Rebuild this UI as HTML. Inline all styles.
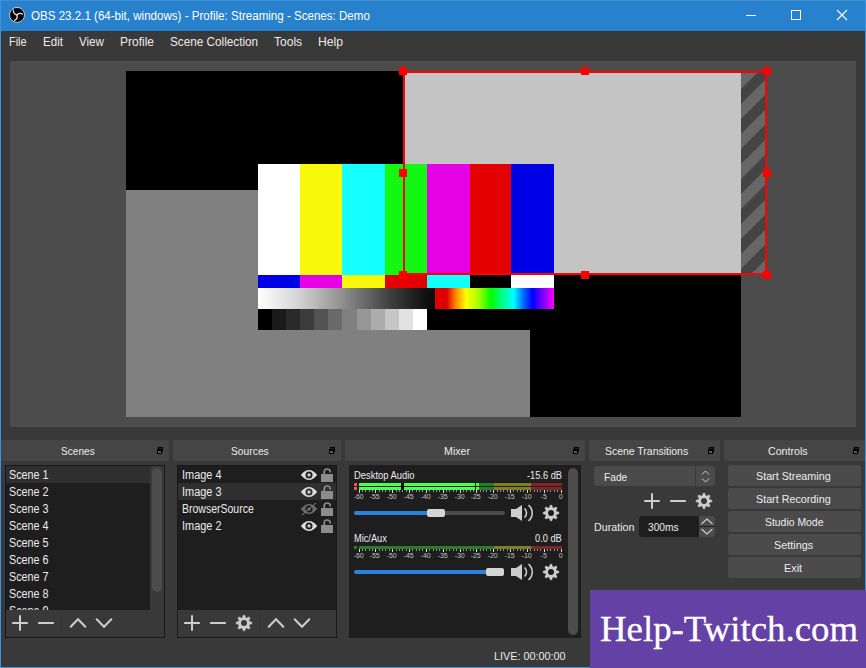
<!DOCTYPE html><html><head><meta charset="utf-8"><style>
html,body{margin:0;padding:0;}
body{width:866px;height:668px;overflow:hidden;background:#3a393a;position:relative;}
body>div{position:absolute;}
.t{white-space:pre;line-height:20px;transform-origin:0 0;}
</style></head><body>
<div style="left:0px;top:0px;width:866px;height:31px;background:#2881cc;"></div>
<div style="left:0px;top:0px;width:866px;height:1px;background:#3e8fcf;"></div>
<div style="left:0px;top:0px;width:1px;height:668px;background:#3d93dd;"></div>
<div style="left:865px;top:0px;width:1px;height:668px;background:#3d93dd;"></div>
<div style="left:0px;top:667px;width:866px;height:1px;background:#3d93dd;"></div>
<div class="t" style="left:30.80px;top:6px;font-size:12.5px;color:#ffffff;transform:scaleX(0.9256);font-family:'Liberation Sans', sans-serif;">OBS 23.2.1 (64-bit, windows) - Profile: Streaming - Scenes: Demo</div>
<div class="t" style="left:9.40px;top:32px;font-size:12.5px;color:#ebebeb;transform:scaleX(0.8745);font-family:'Liberation Sans', sans-serif;">File</div>
<div class="t" style="left:43.00px;top:32px;font-size:12.5px;color:#ebebeb;transform:scaleX(0.9249);font-family:'Liberation Sans', sans-serif;">Edit</div>
<div class="t" style="left:79.00px;top:32px;font-size:12.5px;color:#ebebeb;transform:scaleX(0.9259);font-family:'Liberation Sans', sans-serif;">View</div>
<div class="t" style="left:120.00px;top:32px;font-size:12.5px;color:#ebebeb;transform:scaleX(0.9611);font-family:'Liberation Sans', sans-serif;">Profile</div>
<div class="t" style="left:170.00px;top:32px;font-size:12.5px;color:#ebebeb;transform:scaleX(0.9387);font-family:'Liberation Sans', sans-serif;">Scene Collection</div>
<div class="t" style="left:274.00px;top:32px;font-size:12.5px;color:#ebebeb;transform:scaleX(0.9614);font-family:'Liberation Sans', sans-serif;">Tools</div>
<div class="t" style="left:318.00px;top:32px;font-size:12.5px;color:#ebebeb;transform:scaleX(0.9709);font-family:'Liberation Sans', sans-serif;">Help</div>
<div style="left:10px;top:61px;width:846px;height:366px;background:#4c4c4c;"></div>
<div style="left:126px;top:71px;width:615px;height:346px;background:#000000;"></div>
<div style="left:126px;top:190px;width:404px;height:227px;background:#808080;"></div>
<div style="left:403px;top:71px;width:338px;height:204px;background:#c4c4c4;"></div>
<div style="left:741px;top:71px;width:26px;height:204px;overflow:hidden"><svg width="26" height="204" style="display:block"><rect width="26" height="204" fill="#676767"/><polygon points="-42,0 -27,0 -427,400 -442,400" fill="#444444"/><polygon points="-12,0 3,0 -397,400 -412,400" fill="#444444"/><polygon points="18,0 33,0 -367,400 -382,400" fill="#444444"/><polygon points="48,0 63,0 -337,400 -352,400" fill="#444444"/><polygon points="78,0 93,0 -307,400 -322,400" fill="#444444"/><polygon points="108,0 123,0 -277,400 -292,400" fill="#444444"/><polygon points="138,0 153,0 -247,400 -262,400" fill="#444444"/><polygon points="168,0 183,0 -217,400 -232,400" fill="#444444"/><polygon points="198,0 213,0 -187,400 -202,400" fill="#444444"/><polygon points="228,0 243,0 -157,400 -172,400" fill="#444444"/><polygon points="258,0 273,0 -127,400 -142,400" fill="#444444"/><polygon points="288,0 303,0 -97,400 -112,400" fill="#444444"/><polygon points="318,0 333,0 -67,400 -82,400" fill="#444444"/><polygon points="348,0 363,0 -37,400 -52,400" fill="#444444"/></svg></div>
<div style="left:258px;top:164px;width:42px;height:111px;background:#ffffff;"></div>
<div style="left:258px;top:275px;width:42px;height:13px;background:#0000e6;"></div>
<div style="left:300px;top:164px;width:42px;height:111px;background:#f8f80a;"></div>
<div style="left:300px;top:275px;width:42px;height:13px;background:#e600e6;"></div>
<div style="left:342px;top:164px;width:43px;height:111px;background:#14ffff;"></div>
<div style="left:342px;top:275px;width:43px;height:13px;background:#f8f80a;"></div>
<div style="left:385px;top:164px;width:42px;height:111px;background:#12f812;"></div>
<div style="left:385px;top:275px;width:42px;height:13px;background:#e40000;"></div>
<div style="left:427px;top:164px;width:43px;height:111px;background:#e600e6;"></div>
<div style="left:427px;top:275px;width:43px;height:13px;background:#14ffff;"></div>
<div style="left:470px;top:164px;width:41px;height:111px;background:#e40000;"></div>
<div style="left:470px;top:275px;width:41px;height:13px;background:#000000;"></div>
<div style="left:511px;top:164px;width:43px;height:111px;background:#0000e6;"></div>
<div style="left:511px;top:275px;width:43px;height:13px;background:#ffffff;"></div>
<div style="left:258px;top:288px;width:296px;height:21px;background:#000000;"></div>
<div style="left:258px;top:288px;width:177px;height:21px;background:linear-gradient(to right,#ffffff 0%,#d6d6d6 22%,#8e8e8e 48%,#3e3e3e 75%,#101010 95%,#0a0a0a 100%);"></div>
<div style="left:435px;top:288px;width:119px;height:21px;background:linear-gradient(to right,#e00000 0%,#e00000 10%,#ff8000 17%,#ffff00 26%,#a0ff00 37%,#00ff00 47%,#00ff80 56%,#00ffff 66%,#0060ff 75%,#0000ff 82%,#8000ff 91%,#ff00ff 100%);"></div>
<div style="left:258px;top:309px;width:296px;height:21px;background:#000000;"></div>
<div style="left:258px;top:309px;width:14px;height:21px;background:#000000;"></div>
<div style="left:272px;top:309px;width:14px;height:21px;background:#1a1a1a;"></div>
<div style="left:286px;top:309px;width:14px;height:21px;background:#2a2a2a;"></div>
<div style="left:300px;top:309px;width:14px;height:21px;background:#3c3c3c;"></div>
<div style="left:314px;top:309px;width:14px;height:21px;background:#535353;"></div>
<div style="left:328px;top:309px;width:14px;height:21px;background:#6a6a6a;"></div>
<div style="left:342px;top:309px;width:15px;height:21px;background:#808080;"></div>
<div style="left:357px;top:309px;width:14px;height:21px;background:#969696;"></div>
<div style="left:371px;top:309px;width:14px;height:21px;background:#acacac;"></div>
<div style="left:385px;top:309px;width:14px;height:21px;background:#c6c6c6;"></div>
<div style="left:399px;top:309px;width:14px;height:21px;background:#e2e2e2;"></div>
<div style="left:413px;top:309px;width:14px;height:21px;background:#ffffff;"></div>
<div style="left:403px;top:71px;width:364px;height:2px;background:#ff0000;"></div>
<div style="left:403px;top:273px;width:364px;height:2px;background:#ff0000;"></div>
<div style="left:403px;top:71px;width:2px;height:204px;background:#ff0000;"></div>
<div style="left:765px;top:71px;width:2px;height:204px;background:#ff0000;"></div>
<div style="left:399px;top:67px;width:8px;height:8px;background:#ff0000;"></div>
<div style="left:399px;top:169px;width:8px;height:8px;background:#ff0000;"></div>
<div style="left:399px;top:271px;width:8px;height:8px;background:#ff0000;"></div>
<div style="left:581px;top:67px;width:8px;height:8px;background:#ff0000;"></div>
<div style="left:581px;top:271px;width:8px;height:8px;background:#ff0000;"></div>
<div style="left:763px;top:67px;width:8px;height:8px;background:#ff0000;"></div>
<div style="left:763px;top:169px;width:8px;height:8px;background:#ff0000;"></div>
<div style="left:763px;top:271px;width:8px;height:8px;background:#ff0000;"></div>
<div style="left:1px;top:440px;width:168px;height:21px;background:#464546;"></div>
<div class="t" style="left:60.50px;top:441px;font-size:11.5px;color:#ebebeb;transform:scaleX(0.8782);font-family:'Liberation Sans', sans-serif;">Scenes</div>
<div style="left:173px;top:440px;width:168px;height:21px;background:#464546;"></div>
<div class="t" style="left:230.60px;top:441px;font-size:11.5px;color:#ebebeb;transform:scaleX(0.8947);font-family:'Liberation Sans', sans-serif;">Sources</div>
<div style="left:345px;top:440px;width:240px;height:21px;background:#464546;"></div>
<div class="t" style="left:444.20px;top:441px;font-size:11.5px;color:#ebebeb;transform:scaleX(0.9280);font-family:'Liberation Sans', sans-serif;">Mixer</div>
<div style="left:589px;top:440px;width:131px;height:21px;background:#464546;"></div>
<div class="t" style="left:605.40px;top:441px;font-size:11.5px;color:#ebebeb;transform:scaleX(0.9094);font-family:'Liberation Sans', sans-serif;">Scene Transitions</div>
<div style="left:724px;top:440px;width:141px;height:21px;background:#464546;"></div>
<div class="t" style="left:767.70px;top:441px;font-size:11.5px;color:#ebebeb;transform:scaleX(0.9259);font-family:'Liberation Sans', sans-serif;">Controls</div>
<div style="left:5px;top:465px;width:160px;height:173px;background:#181818;"></div>
<div style="left:6px;top:466px;width:158px;height:171px;background:#1f1e1f;"></div>
<div style="left:6px;top:466px;width:144px;height:17px;background:#302f30;"></div>
<div class="t" style="left:9.20px;top:465px;font-size:12px;color:#ebebeb;transform:scaleX(0.8955);font-family:'Liberation Sans', sans-serif;">Scene 1</div>
<div class="t" style="left:9.20px;top:482px;font-size:12px;color:#ebebeb;transform:scaleX(0.8955);font-family:'Liberation Sans', sans-serif;">Scene 2</div>
<div class="t" style="left:9.20px;top:499px;font-size:12px;color:#ebebeb;transform:scaleX(0.8955);font-family:'Liberation Sans', sans-serif;">Scene 3</div>
<div class="t" style="left:9.20px;top:516px;font-size:12px;color:#ebebeb;transform:scaleX(0.8955);font-family:'Liberation Sans', sans-serif;">Scene 4</div>
<div class="t" style="left:9.20px;top:533px;font-size:12px;color:#ebebeb;transform:scaleX(0.8955);font-family:'Liberation Sans', sans-serif;">Scene 5</div>
<div class="t" style="left:9.20px;top:550px;font-size:12px;color:#ebebeb;transform:scaleX(0.8955);font-family:'Liberation Sans', sans-serif;">Scene 6</div>
<div class="t" style="left:9.20px;top:567px;font-size:12px;color:#ebebeb;transform:scaleX(0.8955);font-family:'Liberation Sans', sans-serif;">Scene 7</div>
<div class="t" style="left:9.20px;top:584px;font-size:12px;color:#ebebeb;transform:scaleX(0.8955);font-family:'Liberation Sans', sans-serif;">Scene 8</div>
<div class="t" style="left:9.20px;top:601px;font-size:12px;color:#ebebeb;transform:scaleX(0.8955);font-family:'Liberation Sans', sans-serif;">Scene 9</div>
<div style="left:177px;top:465px;width:160px;height:173px;background:#181818;"></div>
<div style="left:178px;top:466px;width:158px;height:171px;background:#1f1e1f;"></div>
<div style="left:178px;top:483px;width:158px;height:17px;background:#302f30;"></div>
<div style="left:349px;top:465px;width:232px;height:173px;background:#1f1e1f;"></div>
<svg style="position:absolute;left:155px;top:442px" width="14" height="16" viewBox="155 442 14 16"><rect x="158" y="447" width="5" height="1.5" fill="#000"/><rect x="162" y="447" width="1" height="5" fill="#000"/><rect x="158" y="447" width="1" height="2" fill="#000"/><rect x="157" y="449" width="5" height="5" fill="#000"/><rect x="158" y="451" width="3" height="2" fill="#5c5c5c"/></svg>
<svg style="position:absolute;left:327px;top:442px" width="14" height="16" viewBox="327 442 14 16"><rect x="330" y="447" width="5" height="1.5" fill="#000"/><rect x="334" y="447" width="1" height="5" fill="#000"/><rect x="330" y="447" width="1" height="2" fill="#000"/><rect x="329" y="449" width="5" height="5" fill="#000"/><rect x="330" y="451" width="3" height="2" fill="#5c5c5c"/></svg>
<svg style="position:absolute;left:571px;top:442px" width="14" height="16" viewBox="571 442 14 16"><rect x="574" y="447" width="5" height="1.5" fill="#000"/><rect x="578" y="447" width="1" height="5" fill="#000"/><rect x="574" y="447" width="1" height="2" fill="#000"/><rect x="573" y="449" width="5" height="5" fill="#000"/><rect x="574" y="451" width="3" height="2" fill="#5c5c5c"/></svg>
<svg style="position:absolute;left:706px;top:442px" width="14" height="16" viewBox="706 442 14 16"><rect x="709" y="447" width="5" height="1.5" fill="#000"/><rect x="713" y="447" width="1" height="5" fill="#000"/><rect x="709" y="447" width="1" height="2" fill="#000"/><rect x="708" y="449" width="5" height="5" fill="#000"/><rect x="709" y="451" width="3" height="2" fill="#5c5c5c"/></svg>
<svg style="position:absolute;left:851px;top:442px" width="14" height="16" viewBox="851 442 14 16"><rect x="854" y="447" width="5" height="1.5" fill="#000"/><rect x="858" y="447" width="1" height="5" fill="#000"/><rect x="854" y="447" width="1" height="2" fill="#000"/><rect x="853" y="449" width="5" height="5" fill="#000"/><rect x="854" y="451" width="3" height="2" fill="#5c5c5c"/></svg>
<div style="left:6px;top:610px;width:158px;height:27px;background:#3a393a;"></div>
<div style="left:178px;top:610px;width:158px;height:27px;background:#3a393a;"></div>
<div style="left:61px;top:614px;width:1px;height:18px;background:#313031;"></div>
<div style="left:260px;top:614px;width:1px;height:18px;background:#313031;"></div>
<svg style="position:absolute;left:0px;top:605px" width="170" height="35" viewBox="0 605 170 35"><path d="M12.9,623 H27.1 M20,615.9 V630.1" stroke="#cdcdcd" stroke-width="2" stroke-linecap="round" fill="none"/><path d="M38.9,623 H53.1" stroke="#cdcdcd" stroke-width="2" stroke-linecap="round" fill="none"/><path d="M70.7,626.75 L78,619.25 L85.3,626.75" stroke="#cdcdcd" stroke-width="2" stroke-linecap="round" fill="none"/><path d="M96.7,619.25 L104,626.75 L111.3,619.25" stroke="#cdcdcd" stroke-width="2" stroke-linecap="round" fill="none"/></svg>
<svg style="position:absolute;left:175px;top:605px" width="165" height="35" viewBox="175 605 165 35"><path d="M184.9,623 H199.1 M192,615.9 V630.1" stroke="#cdcdcd" stroke-width="2" stroke-linecap="round" fill="none"/><path d="M210.9,623 H225.1" stroke="#cdcdcd" stroke-width="2" stroke-linecap="round" fill="none"/><polygon points="242.01,618.20 242.39,617.74 243.31,615.13 244.69,615.13 245.61,617.74 245.99,618.20 246.58,618.14 249.08,616.95 250.05,617.92 248.86,620.42 248.80,621.01 249.26,621.39 251.87,622.31 251.87,623.69 249.26,624.61 248.80,624.99 248.86,625.58 250.05,628.08 249.08,629.05 246.58,627.86 245.99,627.80 245.61,628.26 244.69,630.87 243.31,630.87 242.39,628.26 242.01,627.80 241.42,627.86 238.92,629.05 237.95,628.08 239.14,625.58 239.20,624.99 238.74,624.61 236.13,623.69 236.13,622.31 238.74,621.39 239.20,621.01 239.14,620.42 237.95,617.92 238.92,616.95 241.42,618.14" fill="#cdcdcd" stroke="#cdcdcd" stroke-width="0.6" stroke-linejoin="round"/><circle cx="244" cy="623" r="5.5" fill="#cdcdcd"/><circle cx="244" cy="623" r="3.0" fill="#3a393a"/><path d="M268.7,626.75 L276,619.25 L283.3,626.75" stroke="#cdcdcd" stroke-width="2" stroke-linecap="round" fill="none"/><path d="M294.7,619.25 L302,626.75 L309.3,619.25" stroke="#cdcdcd" stroke-width="2" stroke-linecap="round" fill="none"/></svg>
<div style="left:150px;top:466px;width:14px;height:144px;background:#3a393a;"></div>
<div style="left:152px;top:468px;width:10px;height:124px;background:#4c4c4c;border-radius:5px"></div>
<div class="t" style="left:181.50px;top:465px;font-size:12px;color:#ebebeb;transform:scaleX(0.9107);font-family:'Liberation Sans', sans-serif;">Image 4</div>
<svg style="position:absolute;left:298px;top:466px" width="38" height="18" viewBox="298 466 38 18"><path d="M300.8,475 Q309,465 317.2,475 Q309,485 300.8,475 Z" fill="#dcdcdc"/><circle cx="309" cy="475" r="3.5" fill="#1f1e1f"/><circle cx="309" cy="475" r="1.7" fill="#dcdcdc" opacity="0.9"/><rect x="321" y="474" width="12" height="8" fill="#8c8c8c"/><path d="M324.2,475 V472 A3,3 0 0 1 330.2,472 V472.6" stroke="#8c8c8c" stroke-width="1.7" fill="none"/></svg>
<div class="t" style="left:181.50px;top:482px;font-size:12px;color:#ebebeb;transform:scaleX(0.9107);font-family:'Liberation Sans', sans-serif;">Image 3</div>
<svg style="position:absolute;left:298px;top:483px" width="38" height="18" viewBox="298 483 38 18"><path d="M300.8,492 Q309,482 317.2,492 Q309,502 300.8,492 Z" fill="#dcdcdc"/><circle cx="309" cy="492" r="3.5" fill="#302f30"/><circle cx="309" cy="492" r="1.7" fill="#dcdcdc" opacity="0.9"/><rect x="321" y="491" width="12" height="8" fill="#8c8c8c"/><path d="M324.2,492 V489 A3,3 0 0 1 330.2,489 V489.6" stroke="#8c8c8c" stroke-width="1.7" fill="none"/></svg>
<div class="t" style="left:181.50px;top:499px;font-size:12px;color:#ebebeb;transform:scaleX(0.8744);font-family:'Liberation Sans', sans-serif;">BrowserSource</div>
<svg style="position:absolute;left:298px;top:500px" width="38" height="18" viewBox="298 500 38 18"><path d="M300.8,509 Q309,499 317.2,509 Q309,519 300.8,509 Z" fill="#6a6a6a"/><circle cx="309" cy="509" r="3.5" fill="#1f1e1f"/><circle cx="309" cy="509" r="1.7" fill="#6a6a6a" opacity="0.9"/><path d="M302,515 L316,503" stroke="#8a8a8a" stroke-width="1"/><rect x="321" y="508" width="12" height="8" fill="#8c8c8c"/><path d="M324.2,509 V506 A3,3 0 0 1 330.2,506 V506.6" stroke="#8c8c8c" stroke-width="1.7" fill="none"/></svg>
<div class="t" style="left:181.50px;top:516px;font-size:12px;color:#ebebeb;transform:scaleX(0.9107);font-family:'Liberation Sans', sans-serif;">Image 2</div>
<svg style="position:absolute;left:298px;top:517px" width="38" height="18" viewBox="298 517 38 18"><path d="M300.8,526 Q309,516 317.2,526 Q309,536 300.8,526 Z" fill="#dcdcdc"/><circle cx="309" cy="526" r="3.5" fill="#1f1e1f"/><circle cx="309" cy="526" r="1.7" fill="#dcdcdc" opacity="0.9"/><rect x="321" y="525" width="12" height="8" fill="#8c8c8c"/><path d="M324.2,526 V523 A3,3 0 0 1 330.2,523 V523.6" stroke="#8c8c8c" stroke-width="1.7" fill="none"/></svg>
<svg style="position:absolute;left:349px;top:465px" width="232" height="173" viewBox="349 465 232 173"><rect x="359" y="483" width="134.7" height="3" fill="#267f26"/><rect x="493.7" y="483" width="37.30000000000001" height="3" fill="#7f7f26"/><rect x="531" y="483" width="31" height="3" fill="#7f2626"/><rect x="359" y="483" width="120" height="3" fill="#4cff4c"/><rect x="359" y="487" width="134.7" height="3" fill="#267f26"/><rect x="493.7" y="487" width="37.30000000000001" height="3" fill="#7f7f26"/><rect x="531" y="487" width="31" height="3" fill="#7f2626"/><rect x="359" y="487" width="120" height="3" fill="#4cff4c"/><rect x="354" y="483" width="3" height="3" fill="#ff4c4c"/><rect x="354" y="487" width="3" height="3" fill="#ff4c4c"/><rect x="401" y="483" width="3" height="7" fill="#000"/><rect x="475" y="483" width="1" height="7" fill="#1f1e1f"/><rect x="359" y="490" width="1" height="3" fill="#d8d8d8"/><rect x="362" y="490" width="1" height="2" fill="#8f8f8f"/><rect x="365" y="490" width="1" height="2" fill="#8f8f8f"/><rect x="369" y="490" width="1" height="2" fill="#8f8f8f"/><rect x="372" y="490" width="1" height="2" fill="#8f8f8f"/><rect x="375" y="490" width="1" height="3" fill="#d8d8d8"/><rect x="379" y="490" width="1" height="2" fill="#8f8f8f"/><rect x="382" y="490" width="1" height="2" fill="#8f8f8f"/><rect x="385" y="490" width="1" height="2" fill="#8f8f8f"/><rect x="389" y="490" width="1" height="2" fill="#8f8f8f"/><rect x="392" y="490" width="1" height="3" fill="#d8d8d8"/><rect x="396" y="490" width="1" height="2" fill="#8f8f8f"/><rect x="399" y="490" width="1" height="2" fill="#8f8f8f"/><rect x="402" y="490" width="1" height="2" fill="#8f8f8f"/><rect x="406" y="490" width="1" height="2" fill="#8f8f8f"/><rect x="409" y="490" width="1" height="3" fill="#d8d8d8"/><rect x="412" y="490" width="1" height="2" fill="#8f8f8f"/><rect x="416" y="490" width="1" height="2" fill="#8f8f8f"/><rect x="419" y="490" width="1" height="2" fill="#8f8f8f"/><rect x="422" y="490" width="1" height="2" fill="#8f8f8f"/><rect x="426" y="490" width="1" height="3" fill="#d8d8d8"/><rect x="429" y="490" width="1" height="2" fill="#8f8f8f"/><rect x="433" y="490" width="1" height="2" fill="#8f8f8f"/><rect x="436" y="490" width="1" height="2" fill="#8f8f8f"/><rect x="439" y="490" width="1" height="2" fill="#8f8f8f"/><rect x="443" y="490" width="1" height="3" fill="#d8d8d8"/><rect x="446" y="490" width="1" height="2" fill="#8f8f8f"/><rect x="449" y="490" width="1" height="2" fill="#8f8f8f"/><rect x="453" y="490" width="1" height="2" fill="#8f8f8f"/><rect x="456" y="490" width="1" height="2" fill="#8f8f8f"/><rect x="460" y="490" width="1" height="3" fill="#d8d8d8"/><rect x="463" y="490" width="1" height="2" fill="#8f8f8f"/><rect x="466" y="490" width="1" height="2" fill="#8f8f8f"/><rect x="470" y="490" width="1" height="2" fill="#8f8f8f"/><rect x="473" y="490" width="1" height="2" fill="#8f8f8f"/><rect x="476" y="490" width="1" height="3" fill="#d8d8d8"/><rect x="480" y="490" width="1" height="2" fill="#8f8f8f"/><rect x="483" y="490" width="1" height="2" fill="#8f8f8f"/><rect x="486" y="490" width="1" height="2" fill="#8f8f8f"/><rect x="490" y="490" width="1" height="2" fill="#8f8f8f"/><rect x="493" y="490" width="1" height="3" fill="#d8d8d8"/><rect x="497" y="490" width="1" height="2" fill="#8f8f8f"/><rect x="500" y="490" width="1" height="2" fill="#8f8f8f"/><rect x="503" y="490" width="1" height="2" fill="#8f8f8f"/><rect x="507" y="490" width="1" height="2" fill="#8f8f8f"/><rect x="510" y="490" width="1" height="3" fill="#d8d8d8"/><rect x="513" y="490" width="1" height="2" fill="#8f8f8f"/><rect x="517" y="490" width="1" height="2" fill="#8f8f8f"/><rect x="520" y="490" width="1" height="2" fill="#8f8f8f"/><rect x="523" y="490" width="1" height="2" fill="#8f8f8f"/><rect x="527" y="490" width="1" height="3" fill="#d8d8d8"/><rect x="530" y="490" width="1" height="2" fill="#8f8f8f"/><rect x="534" y="490" width="1" height="2" fill="#8f8f8f"/><rect x="537" y="490" width="1" height="2" fill="#8f8f8f"/><rect x="540" y="490" width="1" height="2" fill="#8f8f8f"/><rect x="544" y="490" width="1" height="3" fill="#d8d8d8"/><rect x="547" y="490" width="1" height="2" fill="#8f8f8f"/><rect x="550" y="490" width="1" height="2" fill="#8f8f8f"/><rect x="554" y="490" width="1" height="2" fill="#8f8f8f"/><rect x="557" y="490" width="1" height="2" fill="#8f8f8f"/><rect x="561" y="490" width="1" height="3" fill="#d8d8d8"/><rect x="359" y="546" width="134.7" height="3" fill="#267f26"/><rect x="493.7" y="546" width="37.30000000000001" height="3" fill="#7f7f26"/><rect x="531" y="546" width="31" height="3" fill="#7f2626"/><rect x="354" y="546" width="3" height="3" fill="#267f26"/><rect x="359" y="549" width="1" height="3" fill="#d8d8d8"/><rect x="362" y="549" width="1" height="2" fill="#8f8f8f"/><rect x="365" y="549" width="1" height="2" fill="#8f8f8f"/><rect x="369" y="549" width="1" height="2" fill="#8f8f8f"/><rect x="372" y="549" width="1" height="2" fill="#8f8f8f"/><rect x="375" y="549" width="1" height="3" fill="#d8d8d8"/><rect x="379" y="549" width="1" height="2" fill="#8f8f8f"/><rect x="382" y="549" width="1" height="2" fill="#8f8f8f"/><rect x="385" y="549" width="1" height="2" fill="#8f8f8f"/><rect x="389" y="549" width="1" height="2" fill="#8f8f8f"/><rect x="392" y="549" width="1" height="3" fill="#d8d8d8"/><rect x="396" y="549" width="1" height="2" fill="#8f8f8f"/><rect x="399" y="549" width="1" height="2" fill="#8f8f8f"/><rect x="402" y="549" width="1" height="2" fill="#8f8f8f"/><rect x="406" y="549" width="1" height="2" fill="#8f8f8f"/><rect x="409" y="549" width="1" height="3" fill="#d8d8d8"/><rect x="412" y="549" width="1" height="2" fill="#8f8f8f"/><rect x="416" y="549" width="1" height="2" fill="#8f8f8f"/><rect x="419" y="549" width="1" height="2" fill="#8f8f8f"/><rect x="422" y="549" width="1" height="2" fill="#8f8f8f"/><rect x="426" y="549" width="1" height="3" fill="#d8d8d8"/><rect x="429" y="549" width="1" height="2" fill="#8f8f8f"/><rect x="433" y="549" width="1" height="2" fill="#8f8f8f"/><rect x="436" y="549" width="1" height="2" fill="#8f8f8f"/><rect x="439" y="549" width="1" height="2" fill="#8f8f8f"/><rect x="443" y="549" width="1" height="3" fill="#d8d8d8"/><rect x="446" y="549" width="1" height="2" fill="#8f8f8f"/><rect x="449" y="549" width="1" height="2" fill="#8f8f8f"/><rect x="453" y="549" width="1" height="2" fill="#8f8f8f"/><rect x="456" y="549" width="1" height="2" fill="#8f8f8f"/><rect x="460" y="549" width="1" height="3" fill="#d8d8d8"/><rect x="463" y="549" width="1" height="2" fill="#8f8f8f"/><rect x="466" y="549" width="1" height="2" fill="#8f8f8f"/><rect x="470" y="549" width="1" height="2" fill="#8f8f8f"/><rect x="473" y="549" width="1" height="2" fill="#8f8f8f"/><rect x="476" y="549" width="1" height="3" fill="#d8d8d8"/><rect x="480" y="549" width="1" height="2" fill="#8f8f8f"/><rect x="483" y="549" width="1" height="2" fill="#8f8f8f"/><rect x="486" y="549" width="1" height="2" fill="#8f8f8f"/><rect x="490" y="549" width="1" height="2" fill="#8f8f8f"/><rect x="493" y="549" width="1" height="3" fill="#d8d8d8"/><rect x="497" y="549" width="1" height="2" fill="#8f8f8f"/><rect x="500" y="549" width="1" height="2" fill="#8f8f8f"/><rect x="503" y="549" width="1" height="2" fill="#8f8f8f"/><rect x="507" y="549" width="1" height="2" fill="#8f8f8f"/><rect x="510" y="549" width="1" height="3" fill="#d8d8d8"/><rect x="513" y="549" width="1" height="2" fill="#8f8f8f"/><rect x="517" y="549" width="1" height="2" fill="#8f8f8f"/><rect x="520" y="549" width="1" height="2" fill="#8f8f8f"/><rect x="523" y="549" width="1" height="2" fill="#8f8f8f"/><rect x="527" y="549" width="1" height="3" fill="#d8d8d8"/><rect x="530" y="549" width="1" height="2" fill="#8f8f8f"/><rect x="534" y="549" width="1" height="2" fill="#8f8f8f"/><rect x="537" y="549" width="1" height="2" fill="#8f8f8f"/><rect x="540" y="549" width="1" height="2" fill="#8f8f8f"/><rect x="544" y="549" width="1" height="3" fill="#d8d8d8"/><rect x="547" y="549" width="1" height="2" fill="#8f8f8f"/><rect x="550" y="549" width="1" height="2" fill="#8f8f8f"/><rect x="554" y="549" width="1" height="2" fill="#8f8f8f"/><rect x="557" y="549" width="1" height="2" fill="#8f8f8f"/><rect x="561" y="549" width="1" height="3" fill="#d8d8d8"/></svg>
<div class="t" style="left:354.40px;top:466px;font-size:10px;color:#ebebeb;transform:scaleX(0.9395);font-family:'Liberation Sans', sans-serif;">Desktop Audio</div>
<div class="t" style="left:527.00px;top:466px;font-size:10px;color:#ebebeb;transform:scaleX(0.9272);font-family:'Liberation Sans', sans-serif;">-15.6 dB</div>
<div class="t" style="left:354.40px;top:529px;font-size:10px;color:#ebebeb;transform:scaleX(0.9235);font-family:'Liberation Sans', sans-serif;">Mic/Aux</div>
<div class="t" style="left:535.30px;top:529px;font-size:10px;color:#ebebeb;transform:scaleX(0.9247);font-family:'Liberation Sans', sans-serif;">0.0 dB</div>
<div class="t" style="left:343.7px;width:30px;text-align:center;top:487px;font-size:7px;color:#c0c0c0;font-family:'Liberation Sans',sans-serif">-60</div><div class="t" style="left:343.7px;width:30px;text-align:center;top:546px;font-size:7px;color:#c0c0c0;font-family:'Liberation Sans',sans-serif">-60</div><div class="t" style="left:359.7px;width:30px;text-align:center;top:487px;font-size:7px;color:#c0c0c0;font-family:'Liberation Sans',sans-serif">-55</div><div class="t" style="left:359.7px;width:30px;text-align:center;top:546px;font-size:7px;color:#c0c0c0;font-family:'Liberation Sans',sans-serif">-55</div><div class="t" style="left:376.7px;width:30px;text-align:center;top:487px;font-size:7px;color:#c0c0c0;font-family:'Liberation Sans',sans-serif">-50</div><div class="t" style="left:376.7px;width:30px;text-align:center;top:546px;font-size:7px;color:#c0c0c0;font-family:'Liberation Sans',sans-serif">-50</div><div class="t" style="left:393.7px;width:30px;text-align:center;top:487px;font-size:7px;color:#c0c0c0;font-family:'Liberation Sans',sans-serif">-45</div><div class="t" style="left:393.7px;width:30px;text-align:center;top:546px;font-size:7px;color:#c0c0c0;font-family:'Liberation Sans',sans-serif">-45</div><div class="t" style="left:410.7px;width:30px;text-align:center;top:487px;font-size:7px;color:#c0c0c0;font-family:'Liberation Sans',sans-serif">-40</div><div class="t" style="left:410.7px;width:30px;text-align:center;top:546px;font-size:7px;color:#c0c0c0;font-family:'Liberation Sans',sans-serif">-40</div><div class="t" style="left:427.7px;width:30px;text-align:center;top:487px;font-size:7px;color:#c0c0c0;font-family:'Liberation Sans',sans-serif">-35</div><div class="t" style="left:427.7px;width:30px;text-align:center;top:546px;font-size:7px;color:#c0c0c0;font-family:'Liberation Sans',sans-serif">-35</div><div class="t" style="left:444.7px;width:30px;text-align:center;top:487px;font-size:7px;color:#c0c0c0;font-family:'Liberation Sans',sans-serif">-30</div><div class="t" style="left:444.7px;width:30px;text-align:center;top:546px;font-size:7px;color:#c0c0c0;font-family:'Liberation Sans',sans-serif">-30</div><div class="t" style="left:460.7px;width:30px;text-align:center;top:487px;font-size:7px;color:#c0c0c0;font-family:'Liberation Sans',sans-serif">-25</div><div class="t" style="left:460.7px;width:30px;text-align:center;top:546px;font-size:7px;color:#c0c0c0;font-family:'Liberation Sans',sans-serif">-25</div><div class="t" style="left:477.7px;width:30px;text-align:center;top:487px;font-size:7px;color:#c0c0c0;font-family:'Liberation Sans',sans-serif">-20</div><div class="t" style="left:477.7px;width:30px;text-align:center;top:546px;font-size:7px;color:#c0c0c0;font-family:'Liberation Sans',sans-serif">-20</div><div class="t" style="left:494.7px;width:30px;text-align:center;top:487px;font-size:7px;color:#c0c0c0;font-family:'Liberation Sans',sans-serif">-15</div><div class="t" style="left:494.7px;width:30px;text-align:center;top:546px;font-size:7px;color:#c0c0c0;font-family:'Liberation Sans',sans-serif">-15</div><div class="t" style="left:511.70000000000005px;width:30px;text-align:center;top:487px;font-size:7px;color:#c0c0c0;font-family:'Liberation Sans',sans-serif">-10</div><div class="t" style="left:511.70000000000005px;width:30px;text-align:center;top:546px;font-size:7px;color:#c0c0c0;font-family:'Liberation Sans',sans-serif">-10</div><div class="t" style="left:528.7px;width:30px;text-align:center;top:487px;font-size:7px;color:#c0c0c0;font-family:'Liberation Sans',sans-serif">-5</div><div class="t" style="left:528.7px;width:30px;text-align:center;top:546px;font-size:7px;color:#c0c0c0;font-family:'Liberation Sans',sans-serif">-5</div><div class="t" style="left:545.7px;width:30px;text-align:center;top:487px;font-size:7px;color:#c0c0c0;font-family:'Liberation Sans',sans-serif">0</div><div class="t" style="left:545.7px;width:30px;text-align:center;top:546px;font-size:7px;color:#c0c0c0;font-family:'Liberation Sans',sans-serif">0</div>
<div style="left:354px;top:511px;width:151px;height:4px;background:#4c4c4c;border-radius:2px"></div>
<div style="left:354px;top:511px;width:80px;height:4px;background:#2a82da;border-radius:2px"></div>
<div style="left:427px;top:509px;width:18px;height:8px;background:#d4d4d4;border-radius:2px"></div>
<div style="left:354px;top:570px;width:140px;height:4px;background:#2a82da;border-radius:2px"></div>
<div style="left:486px;top:567.5px;width:18px;height:8.5px;background:#d4d4d4;border-radius:2px"></div>
<svg style="position:absolute;left:505px;top:500px" width="60" height="85" viewBox="505 500 60 85"><path d="M511,509 H516 L522,505 V521 L516,517 H511 Z" fill="#cdcdcd"/><path d="M524.5,508.5 A6,6 0 0 1 524.5,517.5" stroke="#cdcdcd" stroke-width="1.6" fill="none"/><path d="M528.5,505.2 A10,10 0 0 1 528.5,520.8" stroke="#cdcdcd" stroke-width="1.6" fill="none"/><polygon points="549.01,508.20 549.39,507.74 550.31,505.13 551.69,505.13 552.61,507.74 552.99,508.20 553.58,508.14 556.08,506.95 557.05,507.92 555.86,510.42 555.80,511.01 556.26,511.39 558.87,512.31 558.87,513.69 556.26,514.61 555.80,514.99 555.86,515.58 557.05,518.08 556.08,519.05 553.58,517.86 552.99,517.80 552.61,518.26 551.69,520.87 550.31,520.87 549.39,518.26 549.01,517.80 548.42,517.86 545.92,519.05 544.95,518.08 546.14,515.58 546.20,514.99 545.74,514.61 543.13,513.69 543.13,512.31 545.74,511.39 546.20,511.01 546.14,510.42 544.95,507.92 545.92,506.95 548.42,508.14" fill="#cdcdcd" stroke="#cdcdcd" stroke-width="0.6" stroke-linejoin="round"/><circle cx="551" cy="513" r="5.5" fill="#cdcdcd"/><circle cx="551" cy="513" r="3.0" fill="#1f1e1f"/><path d="M511,568 H516 L522,564 V580 L516,576 H511 Z" fill="#cdcdcd"/><path d="M524.5,567.5 A6,6 0 0 1 524.5,576.5" stroke="#cdcdcd" stroke-width="1.6" fill="none"/><path d="M528.5,564.2 A10,10 0 0 1 528.5,579.8" stroke="#cdcdcd" stroke-width="1.6" fill="none"/><polygon points="549.01,567.20 549.39,566.74 550.31,564.13 551.69,564.13 552.61,566.74 552.99,567.20 553.58,567.14 556.08,565.95 557.05,566.92 555.86,569.42 555.80,570.01 556.26,570.39 558.87,571.31 558.87,572.69 556.26,573.61 555.80,573.99 555.86,574.58 557.05,577.08 556.08,578.05 553.58,576.86 552.99,576.80 552.61,577.26 551.69,579.87 550.31,579.87 549.39,577.26 549.01,576.80 548.42,576.86 545.92,578.05 544.95,577.08 546.14,574.58 546.20,573.99 545.74,573.61 543.13,572.69 543.13,571.31 545.74,570.39 546.20,570.01 546.14,569.42 544.95,566.92 545.92,565.95 548.42,567.14" fill="#cdcdcd" stroke="#cdcdcd" stroke-width="0.6" stroke-linejoin="round"/><circle cx="551" cy="572" r="5.5" fill="#cdcdcd"/><circle cx="551" cy="572" r="3.0" fill="#1f1e1f"/></svg>
<div style="left:568px;top:468px;width:10px;height:167px;background:#4c4c4c;border-radius:5px"></div>
<div style="left:594px;top:466px;width:121px;height:20px;background:#4c4b4c;border-radius:3px"></div>
<div style="left:695px;top:466px;width:1px;height:20px;background:#3a393a;"></div>
<svg style="position:absolute;left:695px;top:466px" width="20" height="20" viewBox="695 466 20 20"><path d="M702,474.5 L705.5,471 L709,474.5" stroke="#cdcdcd" stroke-width="1" fill="none"/><path d="M702,478.5 L705.5,482 L709,478.5" stroke="#cdcdcd" stroke-width="1" fill="none"/></svg>
<div class="t" style="left:603.90px;top:467px;font-size:11.5px;color:#ebebeb;transform:scaleX(0.8876);font-family:'Liberation Sans', sans-serif;">Fade</div>
<svg style="position:absolute;left:640px;top:490px" width="76" height="24" viewBox="640 490 76 24"><path d="M644.9,501 H659.1 M652,493.9 V508.1" stroke="#cdcdcd" stroke-width="2" stroke-linecap="round" fill="none"/><path d="M670.9,501 H685.1" stroke="#cdcdcd" stroke-width="2" stroke-linecap="round" fill="none"/><polygon points="702.01,496.20 702.39,495.74 703.31,493.13 704.69,493.13 705.61,495.74 705.99,496.20 706.58,496.14 709.08,494.95 710.05,495.92 708.86,498.42 708.80,499.01 709.26,499.39 711.87,500.31 711.87,501.69 709.26,502.61 708.80,502.99 708.86,503.58 710.05,506.08 709.08,507.05 706.58,505.86 705.99,505.80 705.61,506.26 704.69,508.87 703.31,508.87 702.39,506.26 702.01,505.80 701.42,505.86 698.92,507.05 697.95,506.08 699.14,503.58 699.20,502.99 698.74,502.61 696.13,501.69 696.13,500.31 698.74,499.39 699.20,499.01 699.14,498.42 697.95,495.92 698.92,494.95 701.42,496.14" fill="#cdcdcd" stroke="#cdcdcd" stroke-width="0.6" stroke-linejoin="round"/><circle cx="704" cy="501" r="5.5" fill="#cdcdcd"/><circle cx="704" cy="501" r="3.0" fill="#3a393a"/></svg>
<div class="t" style="left:594.00px;top:517px;font-size:11.5px;color:#ebebeb;transform:scaleX(0.9310);font-family:'Liberation Sans', sans-serif;">Duration</div>
<div style="left:639px;top:516px;width:76px;height:21px;background:#1f1e1f;border-radius:3px"></div>
<div style="left:699px;top:516px;width:16px;height:10px;background:#4c4b4c;border-radius:0 3px 0 0"></div>
<div style="left:699px;top:527px;width:16px;height:10px;background:#4c4b4c;border-radius:0 0 3px 0"></div>
<svg style="position:absolute;left:699px;top:516px" width="16" height="21" viewBox="699 516 16 21"><path d="M701.5,524 L707,519 L712.5,524" stroke="#cdcdcd" stroke-width="1.2" fill="none"/><path d="M701.5,529 L707,534 L712.5,529" stroke="#cdcdcd" stroke-width="1.2" fill="none"/></svg>
<div class="t" style="left:647.70px;top:517px;font-size:11.5px;color:#ebebeb;transform:scaleX(0.8870);font-family:'Liberation Sans', sans-serif;">300ms</div>
<div style="left:728px;top:465px;width:133px;height:21px;background:#4c4b4c;border-radius:3px"></div>
<div class="t" style="left:756.40px;top:466px;font-size:11.5px;color:#ebebeb;transform:scaleX(0.9340);font-family:'Liberation Sans', sans-serif;">Start Streaming</div>
<div style="left:728px;top:488px;width:133px;height:21px;background:#4c4b4c;border-radius:3px"></div>
<div class="t" style="left:756.40px;top:489px;font-size:11.5px;color:#ebebeb;transform:scaleX(0.9340);font-family:'Liberation Sans', sans-serif;">Start Recording</div>
<div style="left:728px;top:511px;width:133px;height:21px;background:#4c4b4c;border-radius:3px"></div>
<div class="t" style="left:764.50px;top:512px;font-size:11.5px;color:#ebebeb;transform:scaleX(0.9052);font-family:'Liberation Sans', sans-serif;">Studio Mode</div>
<div style="left:728px;top:534px;width:133px;height:21px;background:#4c4b4c;border-radius:3px"></div>
<div class="t" style="left:774.20px;top:535px;font-size:11.5px;color:#ebebeb;transform:scaleX(0.9422);font-family:'Liberation Sans', sans-serif;">Settings</div>
<div style="left:728px;top:557px;width:133px;height:21px;background:#4c4b4c;border-radius:3px"></div>
<div class="t" style="left:784.40px;top:558px;font-size:11.5px;color:#ebebeb;transform:scaleX(0.9412);font-family:'Liberation Sans', sans-serif;">Exit</div>
<div class="t" style="left:494.40px;top:646px;font-size:11.5px;color:#ebebeb;transform:scaleX(0.9406);font-family:'Liberation Sans', sans-serif;">LIVE: 00:00:00</div>
<div style="left:590px;top:590px;width:276px;height:78px;background:#6441a4;"></div>
<div class="t" style="left:599.50px;top:618.5px;font-size:36px;color:#ffffff;transform:scaleX(1.0223);font-family:'Liberation Serif', serif;-webkit-text-stroke:0.3px #ffffff;">Help-Twitch.com</div>
<svg style="position:absolute;left:4px;top:4px" width="26" height="24" viewBox="4 4 26 24"><circle cx="17" cy="14.9" r="7.5" fill="#000" stroke="#e8e8e8" stroke-width="0.8"/><path d="M16.9,14.8 C15,14.6 13.4,13 13.2,10" stroke="#e6e6e6" stroke-width="1.25" fill="none" stroke-linecap="round"/><path d="M17,14.8 C18,13.2 20.6,12.6 22.5,14.2" stroke="#e6e6e6" stroke-width="1.25" fill="none" stroke-linecap="round"/><path d="M17,14.8 C17.5,16.9 16.6,19.4 14.5,20.5" stroke="#e6e6e6" stroke-width="1.25" fill="none" stroke-linecap="round"/></svg>
<svg style="position:absolute;left:740px;top:5px" width="120" height="22" viewBox="740 5 120 22"><rect x="746" y="15" width="10" height="1" fill="#fff"/><rect x="791.5" y="10.5" width="9" height="9" stroke="#fff" stroke-width="1" fill="none"/><path d="M837,10 L847,20 M847,10 L837,20" stroke="#fff" stroke-width="1.1" fill="none"/></svg>
</body></html>
